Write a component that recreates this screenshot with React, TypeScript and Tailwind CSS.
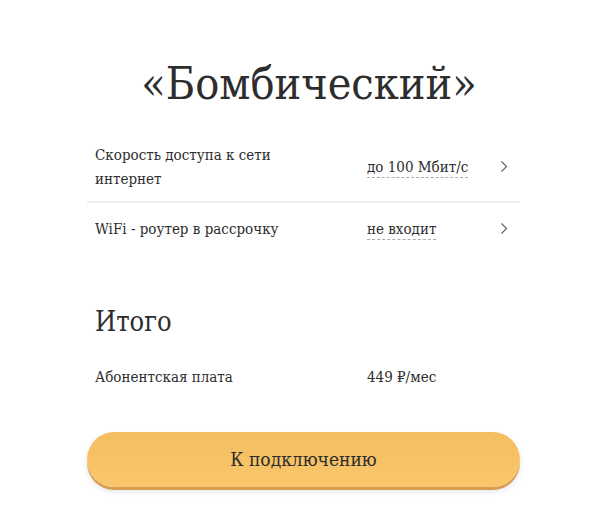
const rows = [
  { label: "Скорость доступа к сети интернет", value: "до 100 Мбит/с", h: "h-[71px] border-b-2 border-[#efefef]" },
  { label: "WiFi - роутер в рассрочку", value: "не входит", h: "h-[51px]" },
];

const Chevron = () => (
  <svg width="8" height="13" viewBox="0 0 8 13" fill="none">
    <path d="M1.5 1.5L6.5 6.5L1.5 11.5" stroke="#666" strokeWidth="1.2" />
  </svg>
);

export default function App() {
  return (
    <div
      className="min-h-[507px] w-[610px] bg-white text-[#2d2d2d]"
      style={{ fontFamily: '"DejaVu Serif", serif' }}
    >
      <div className="ml-[87px] w-[433px] pt-[54px]">
        <h1 className="pl-[11px] text-center text-[44.5px] leading-[60px] [font-stretch:condensed]">
          «Бомбический»
        </h1>

        <div className="mt-[18px]">
          {rows.map((r) => (
            <div key={r.label} className={`flex items-center ${r.h}`}>
              <div className="w-[280px] pl-2 pr-[76px] text-[15px] leading-6 [font-stretch:condensed]">
                {r.label}
              </div>
              <div className="flex-1">
                <span className="border-b border-dashed border-[#aaa] pb-[1px] text-[15px] leading-5 [font-stretch:condensed]">
                  {r.value}
                </span>
              </div>
              <div className="pr-[12px]">
                <Chevron />
              </div>
            </div>
          ))}
        </div>

        <h2 className="mt-[50px] pl-2 text-[27px] leading-9 [font-stretch:condensed]">Итого</h2>

        <div className="mt-[25px] flex text-[15px] leading-6 [font-stretch:condensed]">
          <div className="w-[280px] pl-2">Абонентская плата</div>
          <div>449 ₽/мес</div>
        </div>

        <button className="mt-[43px] flex h-[55px] w-full items-center justify-center rounded-full bg-gradient-to-b from-[#f4bd62] to-[#f9c76a] text-[19px] text-[#2d2d2d] shadow-[0_3px_0_#d99a52,0_4px_6px_rgba(0,0,0,0.12)] [font-stretch:condensed]">
          К подключению
        </button>
      </div>
    </div>
  );
}
